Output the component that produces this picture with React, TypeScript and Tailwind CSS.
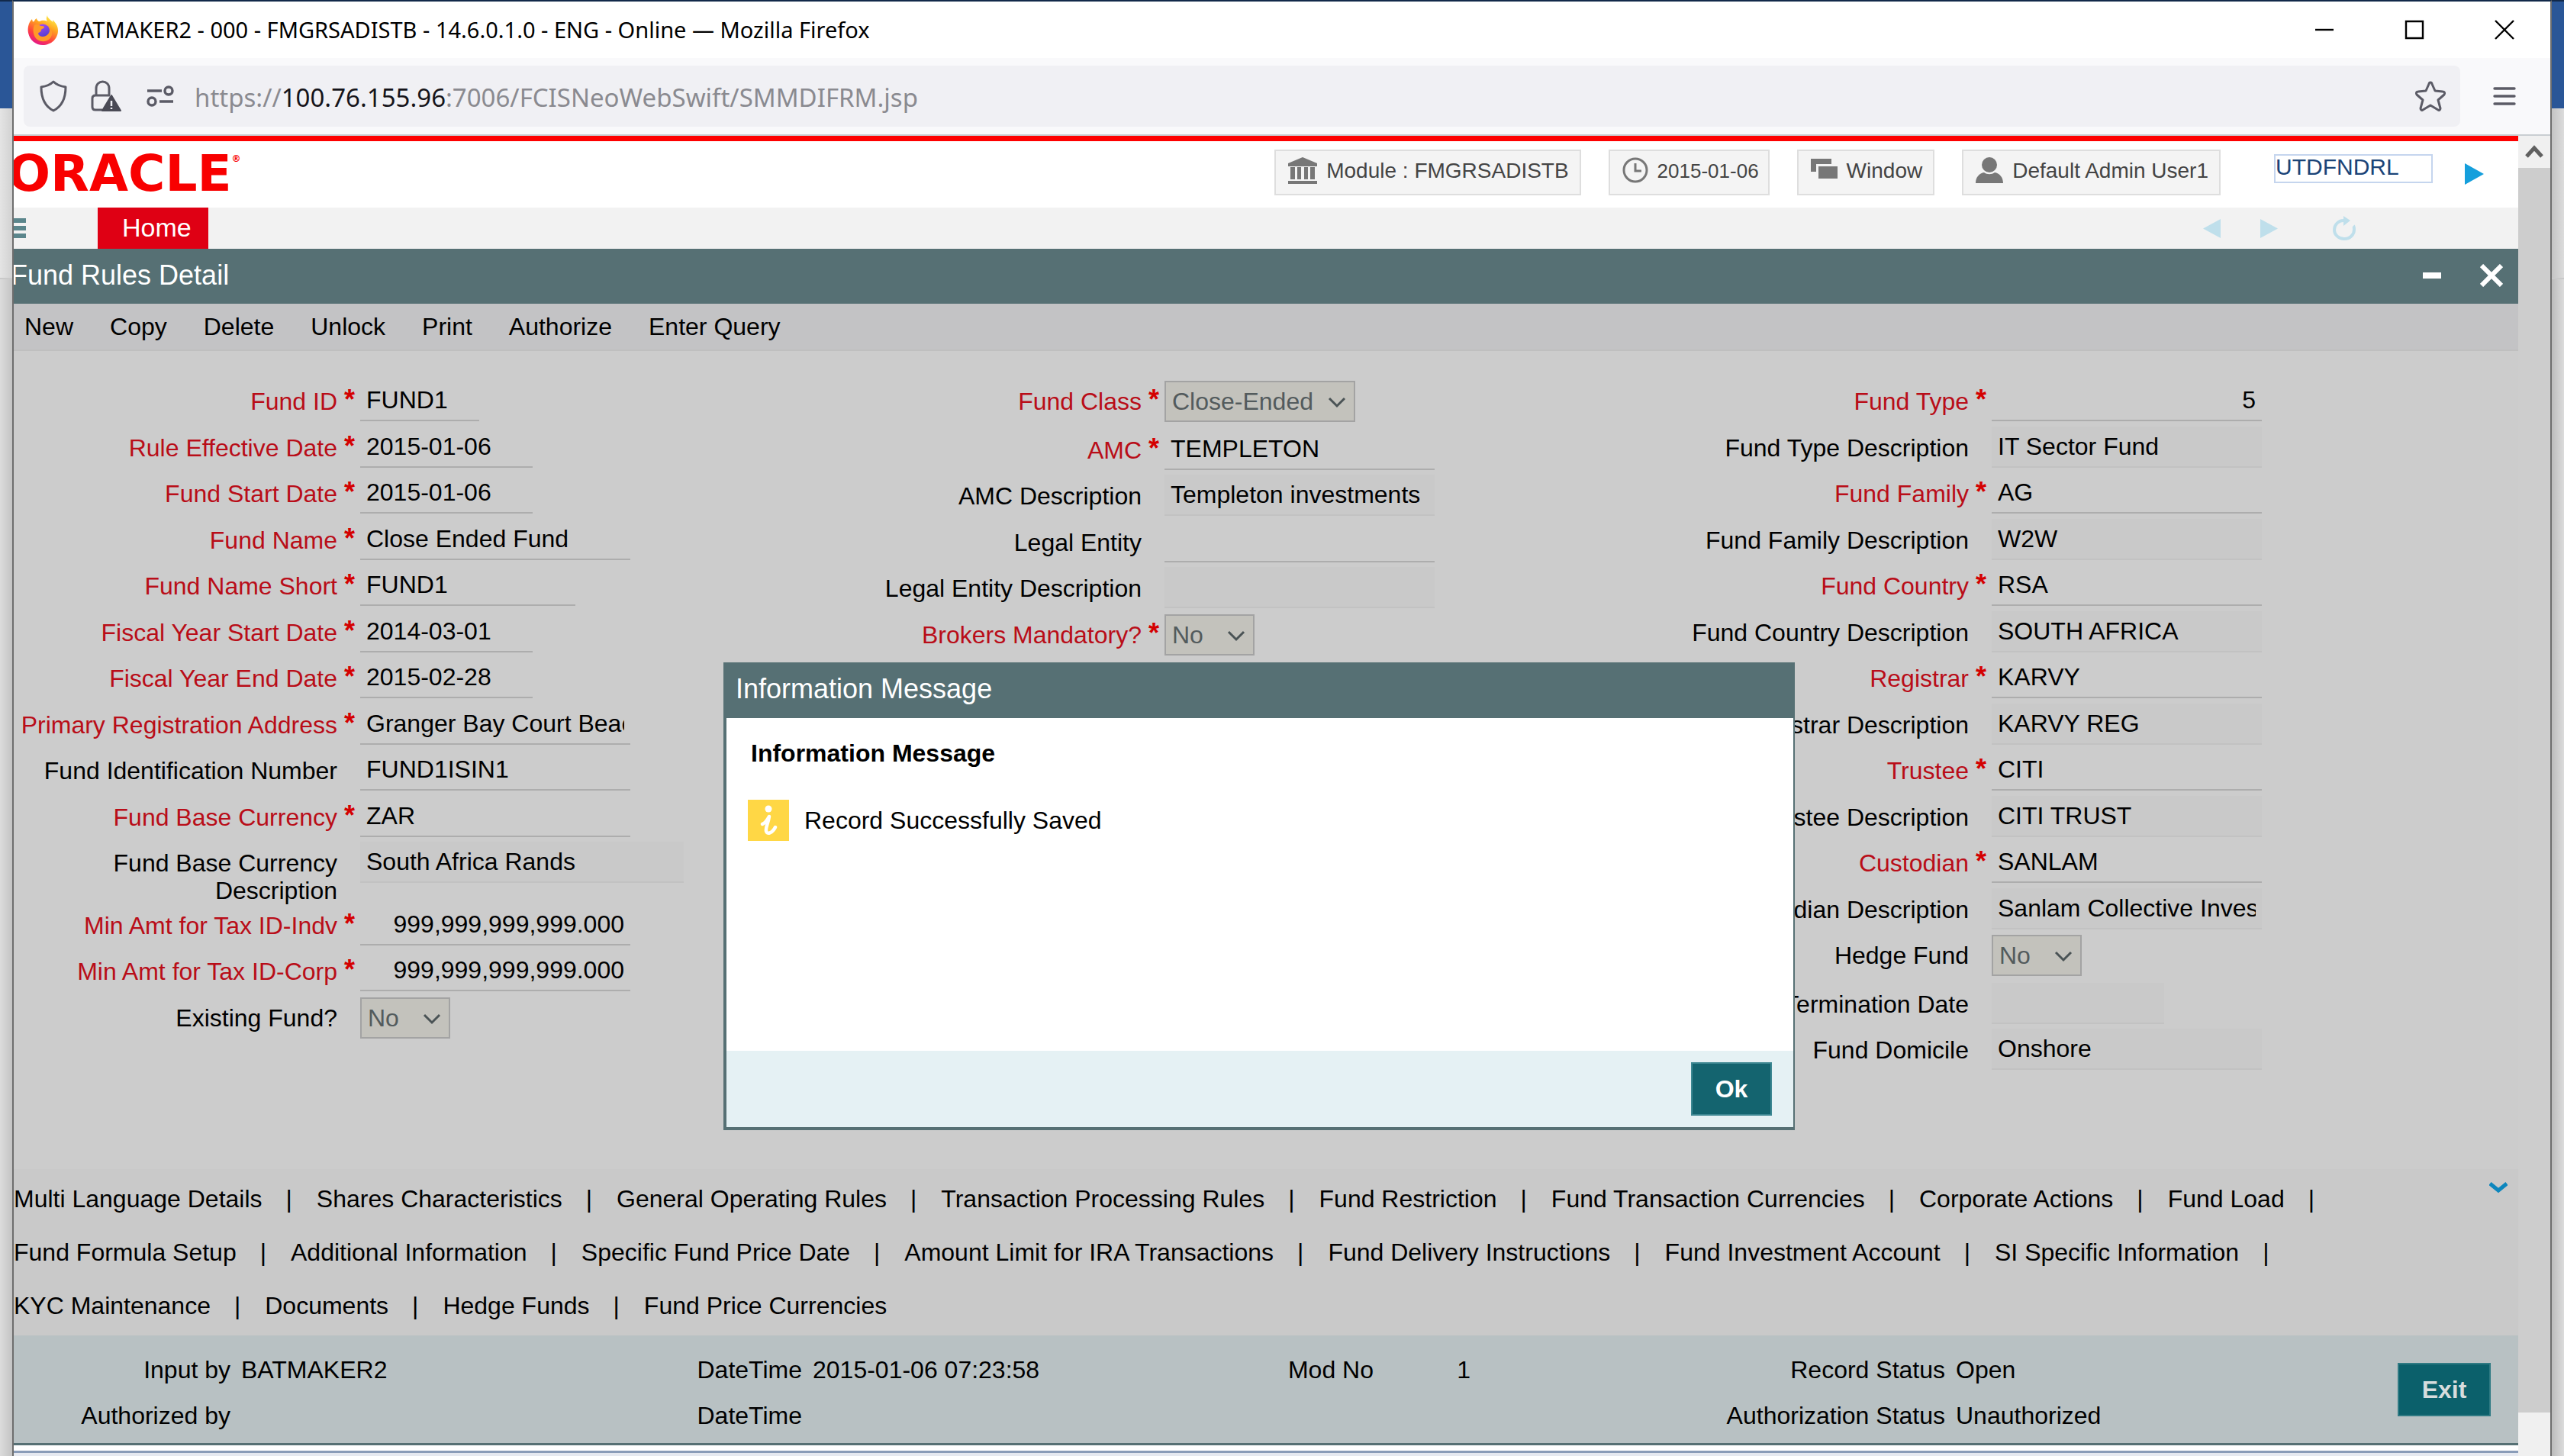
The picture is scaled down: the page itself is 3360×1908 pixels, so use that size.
import type { ReactNode } from 'react'

type Field = {
  id: string
  label: string
  value?: string
  required?: boolean
  kind?: 'text' | 'readonly' | 'select'
  width?: string
  align?: string
}

const leftFields: Field[] = [
  { id: 'fundId', label: 'Fund ID', value: 'FUND1', required: true, width: 'w-[156px]' },
  { id: 'ruleDate', label: 'Rule Effective Date', value: '2015-01-06', required: true, width: 'w-[226px]' },
  { id: 'startDate', label: 'Fund Start Date', value: '2015-01-06', required: true, width: 'w-[226px]' },
  { id: 'fundName', label: 'Fund Name', value: 'Close Ended Fund', required: true },
  { id: 'shortName', label: 'Fund Name Short', value: 'FUND1', required: true, width: 'w-[282px]' },
  { id: 'fyStart', label: 'Fiscal Year Start Date', value: '2014-03-01', required: true, width: 'w-[226px]' },
  { id: 'fyEnd', label: 'Fiscal Year End Date', value: '2015-02-28', required: true, width: 'w-[226px]' },
  { id: 'address', label: 'Primary Registration Address', value: 'Granger Bay Court Beach Road', required: true },
  { id: 'isin', label: 'Fund Identification Number', value: 'FUND1ISIN1' },
  { id: 'currency', label: 'Fund Base Currency', value: 'ZAR', required: true },
  { id: 'currencyDesc', label: 'Fund Base Currency Description', value: 'South Africa Rands', kind: 'readonly', width: 'w-[424px]' },
  { id: 'minIndv', label: 'Min Amt for Tax ID-Indv', value: '999,999,999,999.000', required: true, align: 'text-right' },
  { id: 'minCorp', label: 'Min Amt for Tax ID-Corp', value: '999,999,999,999.000', required: true, align: 'text-right' },
  { id: 'existing', label: 'Existing Fund?', value: 'No', kind: 'select', width: 'w-[118px]' },
]

const middleFields: Field[] = [
  { id: 'fundClass', label: 'Fund Class', value: 'Close-Ended', required: true, kind: 'select', width: 'w-[250px]' },
  { id: 'amc', label: 'AMC', value: 'TEMPLETON', required: true },
  { id: 'amcDesc', label: 'AMC Description', value: 'Templeton investments', kind: 'readonly' },
  { id: 'legal', label: 'Legal Entity' },
  { id: 'legalDesc', label: 'Legal Entity Description', kind: 'readonly' },
  { id: 'brokers', label: 'Brokers Mandatory?', value: 'No', required: true, kind: 'select', width: 'w-[118px]' },
  { id: 'agents', label: '', kind: 'select', width: 'w-[118px]' },
]

const rightFields: Field[] = [
  { id: 'fundType', label: 'Fund Type', value: '5', required: true, align: 'text-right' },
  { id: 'fundTypeDesc', label: 'Fund Type Description', value: 'IT Sector Fund', kind: 'readonly' },
  { id: 'family', label: 'Fund Family', value: 'AG', required: true },
  { id: 'familyDesc', label: 'Fund Family Description', value: 'W2W', kind: 'readonly' },
  { id: 'country', label: 'Fund Country', value: 'RSA', required: true },
  { id: 'countryDesc', label: 'Fund Country Description', value: 'SOUTH AFRICA', kind: 'readonly' },
  { id: 'registrar', label: 'Registrar', value: 'KARVY', required: true },
  { id: 'registrarDesc', label: 'Registrar Description', value: 'KARVY REG', kind: 'readonly' },
  { id: 'trustee', label: 'Trustee', value: 'CITI', required: true },
  { id: 'trusteeDesc', label: 'Trustee Description', value: 'CITI TRUST', kind: 'readonly' },
  { id: 'custodian', label: 'Custodian', value: 'SANLAM', required: true },
  { id: 'custodianDesc', label: 'Custodian Description', value: 'Sanlam Collective Investments', kind: 'readonly' },
  { id: 'hedge', label: 'Hedge Fund', value: 'No', kind: 'select', width: 'w-[118px]' },
  { id: 'termination', label: 'Termination Date', kind: 'readonly', width: 'w-[226px]' },
  { id: 'domicile', label: 'Fund Domicile', value: 'Onshore', kind: 'readonly' },
]

const actions = ['New', 'Copy', 'Delete', 'Unlock', 'Print', 'Authorize', 'Enter Query']

const subscreens = [
  'Multi Language Details', 'Shares Characteristics', 'General Operating Rules',
  'Transaction Processing Rules', 'Fund Restriction', 'Fund Transaction Currencies',
  'Corporate Actions', 'Fund Load', 'Fund Formula Setup', 'Additional Information',
  'Specific Fund Price Date', 'Amount Limit for IRA Transactions',
  'Fund Delivery Instructions', 'Fund Investment Account', 'SI Specific Information',
  'KYC Maintenance', 'Documents', 'Hedge Funds', 'Fund Price Currencies',
]

function FieldControl({ field }: { field: Field }) {
  const width = field.width ?? 'w-[354px]'

  if (field.kind === 'select') {
    return (
      <div className={`relative mt-px h-[54px] ${width}`}>
        <select
          id={field.id}
          disabled
          className="h-full w-full appearance-none border-2 border-[#a3a3a3] bg-[#c3c2bc] pl-2 text-[#535b5d] opacity-100"
        >
          <option>{field.value}</option>
        </select>
        <svg className="pointer-events-none absolute top-5 right-3 h-4 w-6" viewBox="0 0 24 16" fill="none" stroke="#4a5355" strokeWidth="3">
          <path d="M2 3l10 10L22 3" />
        </svg>
      </div>
    )
  }

  const look = field.kind === 'readonly' ? 'bg-[#c9c9c9] border-[#c2c2c2]' : 'border-[#adadad]'
  return (
    <input
      id={field.id}
      type="text"
      readOnly
      defaultValue={field.value}
      className={`h-[54px] border-b-2 px-2 text-black outline-none ${look} ${width} ${field.align ?? ''}`}
    />
  )
}

function FieldColumn({ fields, labelWidth }: { fields: Field[]; labelWidth: string }) {
  return (
    <div>
      {fields.map((field) => (
        <div key={field.id} className="flex min-h-[61px] items-start even:min-h-[60px]">
          <label
            htmlFor={field.id}
            className={`shrink-0 pt-[10px] pl-2 text-right ${labelWidth} ${field.required ? 'text-[#b90d18]' : 'text-black'}`}
          >
            {field.label}
          </label>
          <span className="w-[30px] shrink-0 pt-2 pl-[2px] text-center text-[36px] leading-9 font-bold text-[#d40000]">
            {field.required && '*'}
          </span>
          <div className={field.kind === 'select' ? 'pb-[9px]' : ''}>
            <FieldControl field={field} />
          </div>
        </div>
      ))}
    </div>
  )
}

function InfoBox({ icon, children, small }: { icon: ReactNode; children: ReactNode; small?: boolean }) {
  return (
    <button
      className={`flex items-start gap-3 border-2 border-[#dedede] bg-[#f4f4f4] pt-2 pb-3 pl-4 leading-9 text-[#444] ${small ? 'pr-3 text-[26px]' : 'pr-[14px] text-[28px]'}`}
    >
      {icon}
      <span>{children}</span>
    </button>
  )
}

function FirefoxIcon() {
  return (
    <svg className="h-10 w-10" viewBox="0 0 40 40">
      <defs>
        <linearGradient id="flame" x1="0.8" y1="0.05" x2="0.3" y2="1">
          <stop offset="0" stopColor="#fff04a" />
          <stop offset="0.35" stopColor="#ffa21f" />
          <stop offset="0.7" stopColor="#ff4040" />
          <stop offset="1" stopColor="#e3158c" />
        </linearGradient>
        <linearGradient id="globe" x1="0.3" y1="0" x2="0.7" y2="1">
          <stop offset="0" stopColor="#a44bf5" />
          <stop offset="1" stopColor="#4a3bc9" />
        </linearGradient>
      </defs>
      <path fill="url(#flame)" d="M26 1c-1 3-2 4 0 8-4-2-8-1-10 0-2 0-4-2-4-4-2 1-3 3-3 4-1 0-2 0-2 1 0-1-1-3-1-4C1 11 0 18 1 24c2 10 10 16 19 16 11 0 20-8 20-19 0-7-4-11-7-14 0 2 0 3 1 4-3-4-8-6-8-10z" />
      <circle cx="20" cy="22" r="9.500" fill="url(#globe)" />
      <path fill="#ff9a28" d="M9 14c3-2 6-1 8 1 3 0 5 0 5 2 0 1-4 2-4 3 0 4-4 3-4 5 1 4 6 5 10 3 6-3 6-9 3-13 6 4 7 12 2 17-7 6-17 3-20-4-2-5-2-10 0-14z" />
    </svg>
  )
}

function BrowserChrome() {
  return (
    <>
      <div className="flex h-[74px] items-center gap-[10px] bg-white pl-[18px] font-['Noto_Sans',sans-serif] text-[29px] text-black">
        <FirefoxIcon />
        <span className="flex-1">BATMAKER2 - 000 - FMGRSADISTB - 14.6.0.1.0 - ENG - Online — Mozilla Firefox</span>
        <div className="flex gap-[90px] pr-[46px]">
          <button aria-label="Minimize">
            <svg className="h-7 w-7" viewBox="0 0 28 28" stroke="#000" strokeWidth="2.400"><path d="M2 14h24" /></svg>
          </button>
          <button aria-label="Maximize">
            <svg className="h-7 w-7" viewBox="0 0 28 28" fill="none" stroke="#000" strokeWidth="2.400"><path d="M3 3h22v22H3z" /></svg>
          </button>
          <button aria-label="Close">
            <svg className="h-7 w-7" viewBox="0 0 28 28" stroke="#000" strokeWidth="2.400"><path d="M2 2l24 24M26 2L2 26" /></svg>
          </button>
        </div>
      </div>

      <div className="flex items-center gap-[42px] border-b-2 border-[#c9ced2] bg-[#f9f9fb] py-[10px] pr-[44px] pl-[13px]">
        <div className="flex h-20 flex-1 items-center rounded-lg bg-[#f0f0f4] pr-[18px] pl-5 font-['Noto_Sans',sans-serif] text-[33px]">
          <svg className="h-[42px] w-[38px]" viewBox="0 0 38 42" fill="none" stroke="#5b5b66" strokeWidth="3">
            <path d="M19 2c4 4 9 6 16 7 0 14-4 25-16 31C7 34 3 23 3 9c7-1 12-3 16-7z" strokeLinejoin="round" />
          </svg>
          <svg className="ml-[30px] h-[42px] w-10" viewBox="0 0 40 42">
            <g fill="none" stroke="#5b5b66" strokeWidth="3">
              <path d="M15 39H6c-2 0-4-1-4-4V24c0-3 2-4 4-4h19" />
              <path d="M7 20v-9c0-12 17-12 17 0v9" />
            </g>
            <path d="M27 20L15 40h24z" fill="#4a4a55" stroke="#4a4a55" strokeWidth="2" strokeLinejoin="round" />
            <path d="M27 27v7M27 36v2" stroke="#f0f0f4" strokeWidth="2.500" />
          </svg>
          <svg className="ml-8 h-8 w-[38px]" viewBox="0 0 38 32" fill="none" stroke="#5b5b66" strokeWidth="3.400">
            <path d="M2 9h19M18 23h18" />
            <circle cx="30" cy="9" r="5" />
            <circle cx="8" cy="23" r="5" />
          </svg>
          <span className="ml-[26px] flex-1 pt-1 text-[#8a8a90]">
            https://<span className="text-[#15141a]">100.76.155.96</span>:7006/FCISNeoWebSwift/SMMDIFRM.jsp
          </span>
          <svg className="h-[42px] w-[42px]" viewBox="0 0 42 42" fill="none" stroke="#5b5b66" strokeWidth="3" strokeLinejoin="round">
            <path d="M21 3c1 0 2 1 2 2l4 9 10 1c3 0 3 3 2 4l-8 7 3 11c0 2-2 3-3 2l-10-6-10 6c-1 1-3 0-3-2l3-11-8-7c-1-1-1-4 2-4l10-1 4-9c0-1 1-2 2-2z" />
          </svg>
        </div>
        <button aria-label="Open menu">
          <svg className="h-7 w-8" viewBox="0 0 32 28" stroke="#5b5b66" strokeWidth="3.400" strokeLinecap="round">
            <path d="M3 4h26M3 14h26M3 24h26" />
          </svg>
        </button>
      </div>
    </>
  )
}

function AppHeader() {
  return (
    <>
      <header className="flex h-[94px] items-start border-t-[7px] border-[#fe0000] bg-white pt-[11px]">
        <div className="-ml-2 flex flex-1 items-start font-['DejaVu_Sans',sans-serif] font-bold text-[#f80000]">
          <span className="mt-2 text-[66px] leading-[48px]">ORACLE</span>
          <span className="mt-1 text-xs">®</span>
        </div>
        <div className="flex items-start gap-9">
          <InfoBox
            icon={
              <svg className="h-[35px] w-[38px]" viewBox="0 0 38 35" fill="#777">
                <path d="M19 0l19 8v4H0V8zM3 13h6v16H3zM12 13h5v16h-5zM21 13h5v16h-5zM29 13h6v16h-6zM0 31h38v4H0z" />
              </svg>
            }
          >
            Module : FMGRSADISTB
          </InfoBox>
          <InfoBox
            small
            icon={
              <svg className="h-[34px] w-[34px]" viewBox="0 0 34 34" fill="none" stroke="#777" strokeWidth="3">
                <circle cx="17" cy="17" r="15" />
                <path d="M17 8v10h8" />
              </svg>
            }
          >
            2015-01-06
          </InfoBox>
          <InfoBox
            icon={
              <svg className="h-[34px] w-[35px]" viewBox="0 0 35 34" fill="#777">
                <path d="M0 2h27v7H7v10H0z" />
                <path d="M10 12h25v16H10z" />
              </svg>
            }
          >
            Window
          </InfoBox>
          <InfoBox
            icon={
              <svg className="h-[34px] w-9" viewBox="0 0 36 34" fill="#777">
                <ellipse cx="18" cy="10" rx="10" ry="10" />
                <path d="M0 34c0-8 5-13 11-14 4 3 10 3 14 0 6 1 11 6 11 14z" />
              </svg>
            }
          >
            Default Admin User1
          </InfoBox>
        </div>
        <input
          aria-label="Screen code"
          defaultValue="UTDFNDRL"
          className="mt-[6px] ml-[70px] h-[38px] w-[208px] border-2 border-[#c5d5ee] pb-1 text-[30px] text-[#1b4478]"
        />
        <button aria-label="Go" className="mt-[18px] mr-[45px] ml-[42px]">
          <svg className="h-7 w-[25px]" viewBox="0 0 25 28" fill="#159fdc"><path d="M0 0l25 14L0 28z" /></svg>
        </button>
      </header>

      <nav className="flex h-[54px] items-center bg-[#f2f2f2]">
        <button aria-label="Menu">
          <svg className="h-7 w-4" viewBox="0 0 16 28" stroke="#5b868c" strokeWidth="6"><path d="M0 4h16M0 14h16M0 24h16" /></svg>
        </button>
        <a href="#home" className="ml-[94px] flex h-full items-center bg-[#df0014] pr-[22px] pb-[2px] pl-8 text-[34px] text-white">Home</a>
        <div className="ml-auto flex items-center pr-[212px]">
          <svg className="h-[25px] w-[23px]" viewBox="0 0 23 25" fill="#bfdfeb"><path d="M23 0L0 12.500 23 25z" /></svg>
          <svg className="ml-[52px] h-[25px] w-[23px]" viewBox="0 0 23 25" fill="#bfdfeb"><path d="M0 0l23 12.500L0 25z" /></svg>
          <svg className="ml-[72px] h-8 w-[31px]" viewBox="0 0 31 32" fill="none" stroke="#bfdfeb" strokeWidth="4">
            <path d="M14 6C7 6 2 12 2 18c0 7 6 12 13 12 8 0 13-6 13-12 0-2 0-4-1-5" />
            <path d="M14 0l9 6-9 7z" fill="#bfdfeb" stroke="none" />
          </svg>
        </div>
      </nav>
    </>
  )
}

function AuditItem({ id, label, value, align }: { id: string; label: string; value?: string; align?: string }) {
  return (
    <div className="flex">
      <label htmlFor={id} className="w-[288px] shrink-0 text-right whitespace-nowrap">{label}</label>
      <input id={id} readOnly defaultValue={value} className={`ml-[14px] outline-none ${align ?? 'w-[400px]'}`} />
    </div>
  )
}

function InfoDialog() {
  return (
    <div
      role="dialog"
      aria-label="Information Message"
      className="absolute top-[868px] left-[948px] flex w-[1404px] flex-col border-t-0 border-r-2 border-b-4 border-l-4 border-[#567074] bg-white text-black"
    >
      <div className="bg-[#567074] pt-[14px] pb-[18px] pl-3 text-[36px] leading-[41px] text-white">Information Message</div>
      <div className="h-[436px] px-7 pt-7">
        <h2 className="pl-1 font-bold">Information Message</h2>
        <div className="mt-[43px] flex items-start gap-5">
          <svg className="h-[54px] w-[54px]" viewBox="0 0 54 54">
            <path fill="#ffd745" d="M0 0h54v54H0z" />
            <circle cx="27" cy="12" r="4.500" fill="#fff" />
            <path d="M19 32c4-1 6-5 9-10-1 8-5 14-4 19 1 5 8 3 12-5" fill="none" stroke="#fff" strokeWidth="4.500" strokeLinecap="round" strokeLinejoin="round" />
          </svg>
          <p className="pt-[9px]">Record Successfully Saved</p>
        </div>
      </div>
      <div className="flex justify-end bg-[#e5f1f4] py-[15px] pr-7">
        <button className="h-[70px] w-[106px] border-2 border-[#3d8792] bg-[#14646f] font-bold text-white">Ok</button>
      </div>
    </div>
  )
}

export default function App() {
  return (
    <div className="relative flex min-h-screen bg-[#dedede] font-['Liberation_Sans',Arial,sans-serif] text-[32px] leading-9">
      <div className="flex w-4 shrink-0 flex-col border-t-2 border-[#12294a]">
        <div className="h-[140px] bg-[#2a5697]" />
        <div className="h-[224px] border-b-2 border-[#c9c9c9] bg-linear-to-r from-[#e4e4e4] to-[#d2d2d2]" />
        <div className="flex-1 bg-linear-to-r from-[#dcdcdc] to-[#c4c4c4]" />
      </div>

      <div className="flex min-w-0 flex-1 flex-col border-t-2 border-r-2 border-l-2 border-t-[#12294a] border-r-[#6e6e6e] border-l-[#6e6e6e]">
        <BrowserChrome />

        <div className="flex flex-1">
          <main className="flex min-w-0 flex-1 flex-col overflow-hidden bg-[#e6e9f0]">
            <AppHeader />

            <div className="flex h-[72px] items-center bg-[#567074] pr-[20px] pb-[2px] text-[36px] text-white">
              <h1 className="-ml-1 flex-1">Fund Rules Detail</h1>
              <button aria-label="Minimize screen">
                <svg className="h-[30px] w-6" viewBox="0 0 24 30" stroke="#fff" strokeWidth="8"><path d="M0 15h24" /></svg>
              </button>
              <button aria-label="Close screen" className="ml-[51px]">
                <svg className="h-[30px] w-[30px]" viewBox="0 0 30 30" stroke="#fff" strokeWidth="6"><path d="M2 2l26 26M28 2L2 28" /></svg>
              </button>
            </div>

            <div className="flex h-[62px] items-center gap-12 border-b-2 border-[#bfbfbf] bg-[#c3c3c5] pl-[14px] text-black">
              {actions.map((action) => (
                <button key={action}>{action}</button>
              ))}
            </div>

            <form className="grid grid-cols-3 bg-[#ccc] pt-[38px] pb-[123px]">
              <FieldColumn fields={leftFields} labelWidth="w-[424px]" />
              <FieldColumn fields={middleFields} labelWidth="w-[384px]" />
              <FieldColumn fields={rightFields} labelWidth="w-[374px]" />
            </form>

            <div className="relative flex flex-wrap gap-x-8 bg-[#c9c9c9] py-1 pr-20 leading-[70px] text-black">
              {subscreens.map((name, i) => (
                <span key={name} className="flex gap-[31px]">
                  <a href="#subscreen">{name}</a>
                  {i < subscreens.length - 1 && <span>|</span>}
                </span>
              ))}
              <svg className="absolute top-4 right-[14px] h-4 w-6" viewBox="0 0 24 16" fill="none" stroke="#0d86bd" strokeWidth="5">
                <path d="M1 3l11 9L23 3" />
              </svg>
            </div>

            <footer className="flex border-b-[3px] border-[#567074] bg-[#b8c1c3] text-black">
              <div className="-ml-1 grid flex-1 grid-cols-4 gap-y-6 pt-[27px] pb-[18px]">
                <AuditItem id="inputBy" label="Input by" value="BATMAKER2" />
                <AuditItem id="inputTime" label="DateTime" value="2015-01-06 07:23:58" />
                <AuditItem id="modNo" label="Mod No" value="1" align="w-[113px] text-right" />
                <AuditItem id="recordStatus" label="Record Status" value="Open" />
                <AuditItem id="authBy" label="Authorized by" />
                <AuditItem id="authTime" label="DateTime" />
                <div />
                <AuditItem id="authStatus" label="Authorization Status" value="Unauthorized" />
              </div>
              <div className="flex w-[290px] items-center justify-end pr-9">
                <button className="h-[70px] w-[122px] border-2 border-[#2f7a83] bg-[#0b606b] font-bold text-[#d6dcdd]">Exit</button>
              </div>
            </footer>
            <div className="h-[10px] border-b-[3px] border-[#8a9cb8] bg-white" />
          </main>

          <div className="flex w-[42px] flex-col bg-[#f0f0f0]">
            <svg className="mx-auto my-3 h-[18px] w-6" viewBox="0 0 24 18" fill="none" stroke="#606060" strokeWidth="5">
              <path d="M2 15L12 4l10 11" />
            </svg>
            <div className="mb-[57px] flex-1 bg-[#cdcdcd]" />
          </div>
        </div>
      </div>

      <div className="flex w-4 shrink-0 flex-col border-t-2 border-[#12294a]">
        <div className="h-[140px] bg-[#2a5697]" />
        <div className="h-[224px] border-b-2 border-[#c9c9c9] bg-linear-to-r from-[#c4c4c4] to-[#dcdcdc]" />
        <div className="flex-1 bg-linear-to-r from-[#bcbcbc] to-[#dcdcdc]" />
      </div>

      <InfoDialog />
    </div>
  )
}
